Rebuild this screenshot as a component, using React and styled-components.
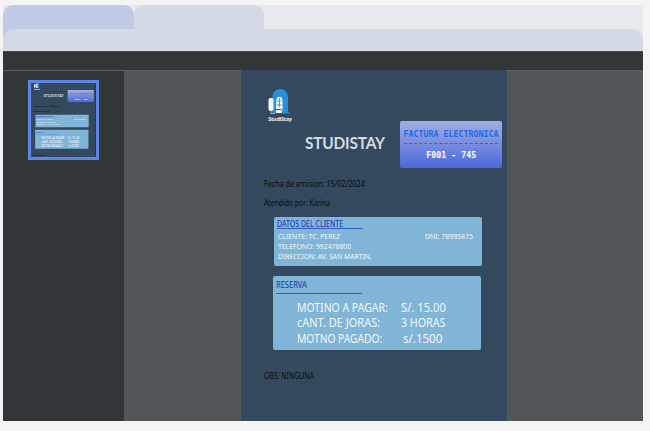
import React from "react";
import styled, { createGlobalStyle } from "styled-components";

const GlobalStyle = createGlobalStyle`
  * { box-sizing: border-box; }
  body { margin: 0; background: #f4f4f4; font-family: "Noto Sans", sans-serif; overflow: hidden; }
`;

const Browser = styled.div`
  width: 640px;
  height: 416px;
  margin: 5px 0 0 3px;
  display: flex;
  flex-direction: column;
  background: #e8e9ee;
`;
const Tabs = styled.div`
  height: 24px;
  display: flex;
`;
const Tab = styled.div`
  width: 130.5px;
  height: ${(p) => (p.$active ? 24 : 34)}px;
  border-radius: 10px 10px 0 0;
  background: ${(p) => (p.$active ? "#d3d9e5" : "#c1cbe6")};
`;
const AddressBar = styled.div`
  flex: none;
  height: 22px;
  border-radius: 10px 10px 0 0;
  background: #d3d9e5;
  z-index: 1;
`;
const Toolbar = styled.div`
  flex: none;
  height: 19px;
  background: #323639;
  border-top: 1px solid #44484c;
`;
const Viewer = styled.div`
  flex: 1;
  min-height: 0;
  display: flex;
  background: #525659;
  border-top: 1px solid #5b5f61;
`;
const Sidebar = styled.div`
  width: 121px;
  padding: 9px 0 0 25px;
  background: #323639;
`;
const Canvas = styled.div`
  flex: 1;
  margin-top: -1px;
  padding-left: 117px;
  overflow: hidden;
`;
const Thumbnail = styled.div`
  width: 71px;
  height: 80px;
  border: 3px solid #5c86e4;
  overflow: hidden;
`;
const Miniature = styled.div`
  width: 266px;
  margin: -6px 0 0 -4px;
  transform: scale(0.256);
  transform-origin: 0 0;
`;

const Sheet = styled.div`
  width: 266px;
  height: 351px;
  padding: 18px 0 0 23px;
  background: #34495e;
  color: #080c12;
`;
const Header = styled.div`
  display: flex;
  height: 80px;
`;
const Brand = styled.div`
  width: 32px;
  display: flex;
  flex-direction: column;
  align-items: center;
`;
const BrandName = styled.div`
  margin-top: 1px;
  font: 700 5.2px/6px "Noto Sans", sans-serif;
  letter-spacing: -0.1px;
  color: #f4f9fc;
  white-space: nowrap;
`;
const Title = styled.div`
  width: 95px;
  padding: 45px 0 0 9px;
  font: 700 16.4px/20px Lato, sans-serif;
  color: #d5dae3;
  white-space: nowrap;
`;
const TitleText = styled.div`
  transform: scaleX(0.94);
  transform-origin: 0 50%;
  letter-spacing: -0.2px;
`;
const InvoiceBox = styled.div`
  width: 102.5px;
  height: 47.5px;
  margin: 32.5px 0 0 8.5px;
  padding-top: 7.5px;
  flex: none;
  border-radius: 2px;
  background: linear-gradient(#a5aedf, #4b68dc);
  font: 700 8.3px/12px "DejaVu Sans Mono", monospace;
  text-align: center;
  white-space: nowrap;
`;
const InvoiceTitle = styled.div`
  height: 16px;
  margin: 0 4px;
  border-bottom: 1px dashed #3264cf;
  color: #1b6cec;
`;
const InvoiceNumber = styled.div`
  padding: 5px 0 0 1px;
  color: #ffffff;
`;
const Text = styled.div`
  font-size: ${(p) => p.$size || 8}px;
  line-height: ${(p) => p.$lh || 10}px;
  transform: scaleX(${(p) => p.$fit || 0.9});
  transform-origin: ${(p) => (p.$end ? "100% 50%" : "0 50%")};
  white-space: pre;
`;
const Meta = styled.div`
  display: flex;
  flex-direction: column;
  gap: 8.5px;
  height: 37.5px;
  margin-top: 11px;
`;
const Card = styled.div`
  width: 208.5px;
  height: ${(p) => p.$height}px;
  margin: ${(p) => p.$margin};
  padding: 2.5px 0 0 3px;
  border-radius: 2px;
  background: #81b5d7;
  color: #f1f8fc;
`;
const CardTitle = styled.div`
  width: 86px;
  height: ${(p) => p.$height}px;
  border-bottom: 1px solid #315fc4;
  color: #1731b0;
`;
const Client = styled.div`
  display: flex;
  justify-content: space-between;
  padding: 2px 9.5px 0 1.5px;
`;
const Amounts = styled.div`
  display: grid;
  grid-template-columns: 104.5px auto;
  padding: 6px 0 0 21px;
`;
const Paid = styled.div`
  padding-left: 1.5px;
`;
const Notes = styled.div`
  margin-top: 21.5px;
`;

function Logo() {
  return (
    <svg width="24" height="27" viewBox="0 0 24 27">
      <path d="M4.500 25V9C4.500 4 8 1 12.300 1s7.700 3.500 7.700 8v14.500L23 25.500H14z" fill="#288fd6" />
      <path d="M8 25V12l1.500-2V9h4v1l1 2v9l-1 4z" fill="#f0f8fc" />
      <path d="M8.500 13h5M8.500 17h5M11.500 10v9" stroke="#3482ba" strokeWidth="0.800" />
      <path d="M8 21.500h5.500" stroke="#2e5d86" strokeWidth="1.200" />
      <rect x="0.500" y="10" width="5" height="13" rx="2" fill="#f5fafd" />
      <path d="M3 22v3.500H7" fill="none" stroke="#b8cddd" strokeWidth="0.800" />
    </svg>
  );
}

function Receipt() {
  return (
    <Sheet>
      <Header>
        <Brand>
          <Logo />
          <BrandName>StudiStay</BrandName>
        </Brand>
        <Title>
          <TitleText>STUDISTAY</TitleText>
        </Title>
        <InvoiceBox>
          <InvoiceTitle>FACTURA ELECTRONICA</InvoiceTitle>
          <InvoiceNumber>F001 - 745</InvoiceNumber>
        </InvoiceBox>
      </Header>
      <Meta>
        <Text>Fecha de emision: 15/02/2024</Text>
        <Text $fit={0.85}>Atendido por: Karina</Text>
      </Meta>
      <Card $height={49.5} $margin="0 0 0 9.500px">
        <CardTitle $height={10}>
          <Text $fit={0.88}>DATOS DEL CLIENTE</Text>
        </CardTitle>
        <Client>
          <div>
            <Text $size={7.5} $fit={0.915}>CLIENTE: TC. PEREZ</Text>
            <Text $size={7.5} $fit={0.91}>TELEFONO: 992478800</Text>
            <Text $size={7.5} $fit={0.9}>DIRECCION: AV. SAN MARTIN,</Text>
          </div>
          <Text $size={7.5} $fit={0.925} $end>DNI: 78995875</Text>
        </Client>
      </Card>
      <Card $height={73.5} $margin="10px 0 0 8.500px">
        <CardTitle $height={15}>
          <Text $lh={11.5} $fit={0.94}>RESERVA</Text>
        </CardTitle>
        <Amounts>
          <Text $size={12.2} $lh={15.5} $fit={0.857}>MOTINO A PAGAR:</Text>
          <Text $size={12.2} $lh={15.5} $fit={0.92}>S/. 15.00</Text>
          <Text $size={12.2} $lh={15.5} $fit={0.9}>cANT. DE JORAS:</Text>
          <Text $size={12.2} $lh={15.5} $fit={0.875}>3 HORAS</Text>
          <Text $size={12.2} $lh={15.5} $fit={0.84}>MOTNO PAGADO:</Text>
          <Paid>
            <Text $size={12.2} $lh={15.5} $fit={0.945}>s/.1500</Text>
          </Paid>
        </Amounts>
      </Card>
      <Notes>
        <Text $fit={0.865}>OBS: NINGUNA</Text>
      </Notes>
    </Sheet>
  );
}

export default function App() {
  return (
    <>
      <GlobalStyle />
      <Browser>
        <Tabs>
          <Tab />
          <Tab $active />
        </Tabs>
        <AddressBar />
        <Toolbar />
        <Viewer>
          <Sidebar>
            <Thumbnail>
              <Miniature>
                <Receipt />
              </Miniature>
            </Thumbnail>
          </Sidebar>
          <Canvas>
            <Receipt />
          </Canvas>
        </Viewer>
      </Browser>
    </>
  );
}
